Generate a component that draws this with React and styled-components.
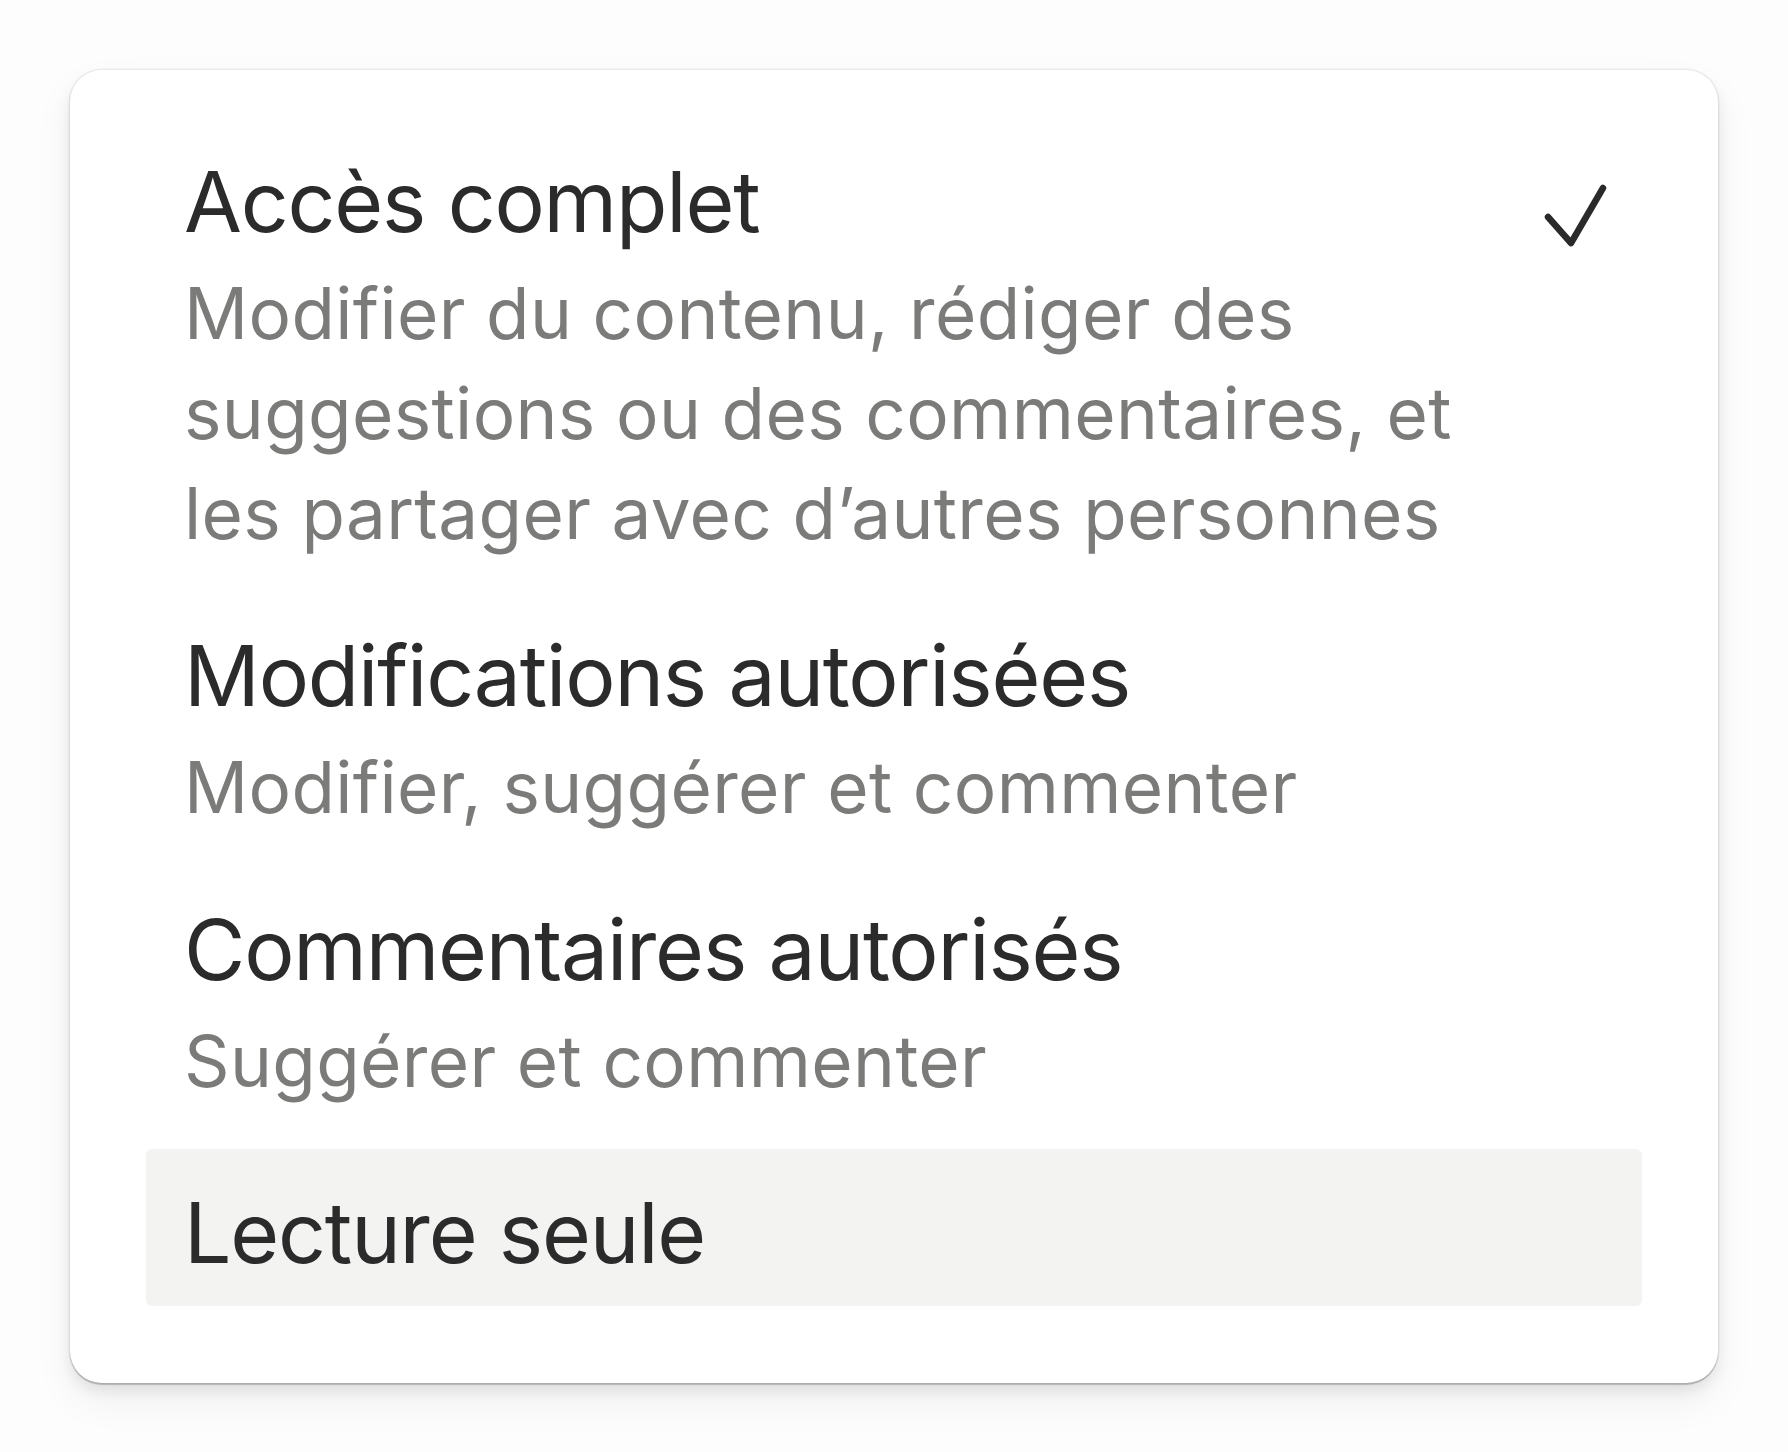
import React from 'react';
import styled, { createGlobalStyle } from 'styled-components';

const GlobalStyle = createGlobalStyle`
  html, body {
    margin: 0;
    padding: 0;
    background: #fdfdfd;
  }
  body {
    font-family: Inter, "Noto Sans", "Liberation Sans", sans-serif;
    -webkit-font-smoothing: antialiased;
  }
`;

const Page = styled.div`
  padding: 70px 70px;
`;

const Menu = styled.div`
  display: flex;
  flex-direction: column;
  background: #ffffff;
  border-radius: 32px;
  padding: 48px 76px 77px;
  box-shadow:
    0 0 0 1.5px rgba(0, 0, 0, 0.06),
    0 2px 1px rgba(0, 0, 0, 0.18),
    0 8px 14px rgba(0, 0, 0, 0.08),
    0 18px 40px rgba(0, 0, 0, 0.06);
`;

const Item = styled.div`
  display: flex;
  align-items: flex-start;
  padding: 34px 34px ${(p) => (p.$active ? '23px' : '29px')} 38px;
  margin-top: ${(p) => (p.$active ? '9px' : '0')};
  border-radius: 6px;
  background: ${(p) => (p.$active ? '#f3f3f2' : 'transparent')};
`;

const Text = styled.div`
  flex: 1;
  display: flex;
  flex-direction: column;
  gap: 11px;
`;

const Title = styled.div`
  font-size: 84px;
  line-height: 100px;
  color: #2b2b2b;
  letter-spacing: -1.2px;
`;

const Description = styled.div`
  font-size: 71px;
  line-height: 100px;
  color: #7b7b7a;
  letter-spacing: 0.35px;
`;

const Check = styled.svg`
  flex: none;
  width: 64px;
  height: 64px;
  margin-top: 32px;
`;

const CheckMark = () => (
  <Check viewBox="0 0 64 64" fill="none">
    <path
      d="M4 33 L27 59 L59 4"
      stroke="#2a2a2a"
      strokeWidth="6.5"
      strokeLinecap="round"
      strokeLinejoin="round"
    />
  </Check>
);

const options = [
  {
    title: 'Accès complet',
    lines: [
      'Modifier du contenu, rédiger des',
      'suggestions ou des commentaires, et',
      'les partager avec d’autres personnes',
    ],
    selected: true,
  },
  {
    title: 'Modifications autorisées',
    lines: ['Modifier, suggérer et commenter'],
  },
  {
    title: 'Commentaires autorisés',
    lines: ['Suggérer et commenter'],
  },
  {
    title: 'Lecture seule',
    lines: [],
    active: true,
  },
];

const App = () => (
  <>
    <GlobalStyle />
    <Page>
      <Menu>
        {options.map((o) => (
          <Item key={o.title} $active={o.active}>
            <Text>
              <Title>{o.title}</Title>
              {o.lines.length > 0 && (
                <Description>
                  {o.lines.map((l, i) => (
                    <React.Fragment key={i}>
                      {i > 0 && <br />}
                      {l}
                    </React.Fragment>
                  ))}
                </Description>
              )}
            </Text>
            {o.selected && <CheckMark />}
          </Item>
        ))}
      </Menu>
    </Page>
  </>
);

export default App;
